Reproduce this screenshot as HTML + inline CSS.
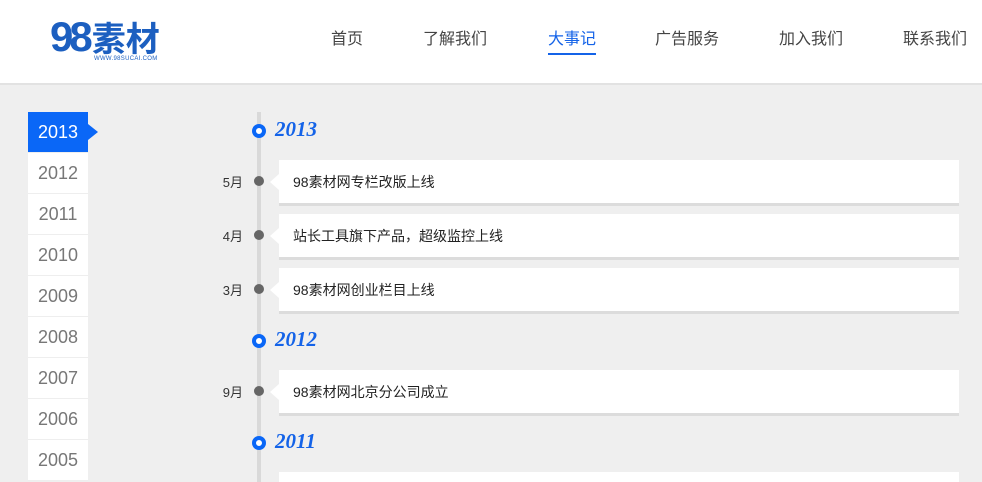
<!DOCTYPE html>
<html><head><meta charset="utf-8"><style>
*{margin:0;padding:0;box-sizing:border-box}
html,body{width:982px;height:482px;overflow:hidden}
body{background:#efefef;font-family:"Liberation Sans","Noto Sans CJK SC",sans-serif;position:relative}
.hd{position:absolute;left:0;top:0;width:982px;height:85px;background:#fff;border-bottom:2px solid #e2e2e2}
.logo{position:absolute;left:50px;top:12px}
.nav a{position:absolute;top:25px;font-size:16px;color:#444;text-decoration:none;white-space:nowrap;transform:translateX(-50%)}
.nav a.on{color:#1463e8}
.nav a.on:after{content:"";position:absolute;left:0;right:0;top:28px;height:2px;background:#1463e8}
.side{position:absolute;left:28px;top:112px;width:60px}
.side div{height:41px;line-height:40px;text-align:center;background:#fff;color:#777;font-size:18px;border-bottom:1px solid #eee}
.side div.on{background:#0a67f7;color:#fff;position:relative}
.side div.on:after{content:"";position:absolute;right:-10px;top:12px;border-left:10px solid #0a67f7;border-top:8px solid transparent;border-bottom:8px solid transparent}
.line{position:absolute;left:257px;top:112px;width:4px;height:370px;background:#d9d9d9}
.yc{position:absolute;left:252px;width:14px;height:14px;border-radius:50%;border:4px solid #0a67f7;background:#fff}
.yt{position:absolute;left:275px;font:italic bold 21px "Liberation Serif",serif;color:#1463e8}
.m{position:absolute;left:200px;width:43px;text-align:right;font-size:13px;color:#333}
.dot{position:absolute;left:254px;width:10px;height:10px;border-radius:50%;background:#666}
.card{position:absolute;left:279px;width:680px;height:46px;background:#fff;border-bottom:3px solid #dcdcdc;font-size:14px;color:#222;padding:12px 0 0 14px}
.card:before{content:"";position:absolute;left:-9px;top:14px;border-right:9px solid #fff;border-top:8px solid transparent;border-bottom:8px solid transparent}
</style></head><body>
<div class="hd">
<div class="logo"><span style="font:bold 42px 'Liberation Sans',sans-serif;color:#1c5fc0;letter-spacing:-4px">98</span><span style="font:bold 34px 'Noto Sans CJK SC',sans-serif;color:#1c5fc0;margin-left:3px">素材</span><div style="position:absolute;left:44px;top:44px;font-size:6px;color:#1c5fc0;white-space:nowrap;letter-spacing:0.3px">WWW.98SUCAI.COM</div></div>
<div class="nav"><a style="left:347px">首页</a><a style="left:455px">了解我们</a><a class="on" style="left:572px">大事记</a><a style="left:687px">广告服务</a><a style="left:811px">加入我们</a><a style="left:935px">联系我们</a></div>
</div>
<div class="side"><div class="on">2013</div><div>2012</div><div>2011</div><div>2010</div><div>2009</div><div>2008</div><div>2007</div><div>2006</div><div>2005</div></div>
<div class="line"></div>
<div class="yc" style="top:124px"></div><div class="yt" style="top:117px">2013</div>
<div class="m" style="top:172px">5月</div><div class="dot" style="top:176px"></div><div class="card" style="top:160px">98素材网专栏改版上线</div>
<div class="m" style="top:226px">4月</div><div class="dot" style="top:230px"></div><div class="card" style="top:214px">站长工具旗下产品，超级监控上线</div>
<div class="m" style="top:280px">3月</div><div class="dot" style="top:284px"></div><div class="card" style="top:268px">98素材网创业栏目上线</div>
<div class="yc" style="top:334px"></div><div class="yt" style="top:327px">2012</div>
<div class="m" style="top:382px">9月</div><div class="dot" style="top:386px"></div><div class="card" style="top:370px">98素材网北京分公司成立</div>
<div class="yc" style="top:436px"></div><div class="yt" style="top:429px">2011</div>
<div class="card" style="top:472px;height:10px;border:0"></div>
</body></html>
